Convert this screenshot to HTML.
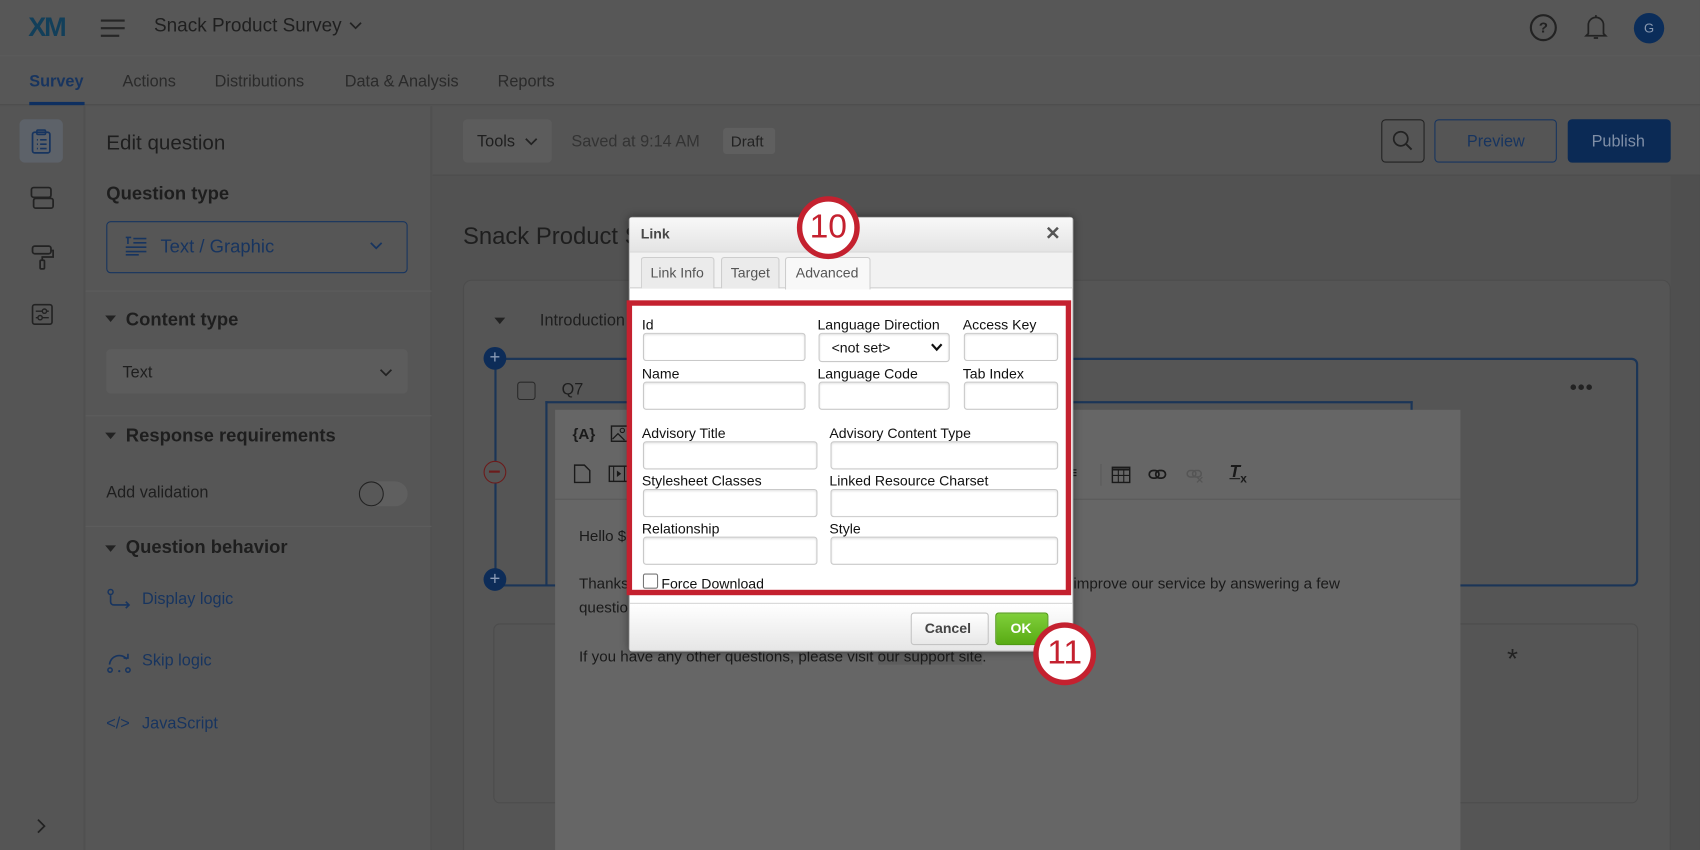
<!DOCTYPE html>
<html><head><meta charset="utf-8">
<style>
*{box-sizing:border-box;margin:0;padding:0}
html,body{width:1700px;height:850px;overflow:hidden;background:#525252}
#w{position:absolute;left:0;top:0;width:1568px;height:784px;transform:scale(1.08418);transform-origin:0 0;font-family:"Liberation Sans",Arial,sans-serif;color:#1e1e1e;background:#525252;overflow:hidden}
.a{position:absolute}
.t{position:absolute;white-space:nowrap;line-height:1}
.lbl{position:absolute;font-size:13px;color:#111;white-space:nowrap;line-height:1}
.in{position:absolute;background:#fff;border:1px solid #c9c9c9;border-radius:3px;box-shadow:inset 0 1px 2px rgba(0,0,0,.12);height:26px}
</style></head><body><div id="w">
<div class="a" style="left:0;top:0;width:1568px;height:52px;background:#575757;border-bottom:1px solid #5d5d5d"></div>
<div class="t" style="left:26px;top:13px;font-size:25px;font-weight:bold;letter-spacing:-2px;color:#123f5a">XM</div>
<div class="a" style="left:93px;top:18px;width:22px;height:2px;background:#262626"></div>
<div class="a" style="left:93px;top:25px;width:22px;height:2px;background:#262626"></div>
<div class="a" style="left:93px;top:32px;width:17px;height:2px;background:#262626"></div>
<div class="t" style="left:142px;top:15px;font-size:17.5px;color:#1f1f1f">Snack Product Survey</div>
<svg class="a" style="left:321px;top:19px" width="14" height="10"><path d="M2 2l5 5 5-5" fill="none" stroke="#222" stroke-width="1.6"/></svg>
<div class="a" style="left:1411px;top:13px;width:25px;height:25px;border:2px solid #222;border-radius:50%;font-size:14px;text-align:center;line-height:21px;font-weight:bold;color:#222">?</div>
<svg class="a" style="left:1461px;top:12px" width="22" height="26"><path d="M4 19V11a7 7 0 0 1 14 0v8l2 2H2zM9 23h4M11 2v2" fill="none" stroke="#222" stroke-width="1.6"/></svg>
<div class="a" style="left:1507px;top:12px;width:28px;height:28px;border-radius:50%;background:#0b2d5a;color:#8a99b0;font-size:12px;text-align:center;line-height:28px">G</div>
<div class="a" style="left:0;top:52px;width:1568px;height:45px;background:#575757;border-bottom:1px solid #4e4e4e"></div>
<div class="t" style="left:27px;top:68px;font-size:15px;font-weight:bold;color:#17345f">Survey</div>
<div class="a" style="left:27px;top:94px;width:51px;height:3px;background:#0e2f60"></div>
<div class="t" style="left:113px;top:68px;font-size:15px;color:#2a2a2a">Actions</div>
<div class="t" style="left:198px;top:68px;font-size:15px;color:#2a2a2a">Distributions</div>
<div class="t" style="left:318px;top:68px;font-size:15px;color:#2a2a2a">Data &amp; Analysis</div>
<div class="t" style="left:459px;top:68px;font-size:15px;color:#2a2a2a">Reports</div>
<div class="a" style="left:0;top:98px;width:78px;height:686px;background:#555;border-right:1px solid #4f4f4f"></div>
<div class="a" style="left:18px;top:110px;width:40px;height:40px;background:#5d6269;border-radius:5px"></div>
<svg class="a" style="left:27px;top:118px" width="22" height="26"><rect x="3" y="4" width="16" height="19" rx="2" fill="none" stroke="#17345f" stroke-width="1.6"/><rect x="7" y="2" width="8" height="4" rx="1" fill="none" stroke="#17345f" stroke-width="1.5"/><path d="M7 11h1M10 11h6M7 15h1M10 15h6M7 19h1M10 19h6" stroke="#17345f" stroke-width="1.5"/></svg>
<svg class="a" style="left:27px;top:170px" width="24" height="26"><rect x="2" y="3" width="18" height="9" rx="2" fill="none" stroke="#222" stroke-width="1.6"/><rect x="4" y="13" width="18" height="9" rx="2" fill="none" stroke="#222" stroke-width="1.6"/></svg>
<svg class="a" style="left:28px;top:224px" width="22" height="26"><rect x="2" y="3" width="17" height="7" rx="2" fill="none" stroke="#222" stroke-width="1.6"/><path d="M19 7h2v6h-10v3" fill="none" stroke="#222" stroke-width="1.6"/><rect x="9" y="16" width="4" height="8" rx="1" fill="none" stroke="#222" stroke-width="1.6"/></svg>
<svg class="a" style="left:28px;top:279px" width="22" height="22"><rect x="2" y="2" width="18" height="18" rx="2" fill="none" stroke="#222" stroke-width="1.5"/><path d="M5 8h12M5 14h12" stroke="#222" stroke-width="1.3"/><circle cx="13" cy="8" r="2" fill="#555" stroke="#222" stroke-width="1.3"/><circle cx="9" cy="14" r="2" fill="#555" stroke="#222" stroke-width="1.3"/></svg>
<svg class="a" style="left:33px;top:754px" width="10" height="16"><path d="M2 2l6 6-6 6" fill="none" stroke="#222" stroke-width="1.6"/></svg>
<div class="a" style="left:79px;top:98px;width:319px;height:686px;background:#565656;border-right:1px solid #4e4e4e"></div>
<div class="t" style="left:98px;top:123px;font-size:19px;color:#1e1e1e">Edit question</div>
<div class="t" style="left:98px;top:170px;font-size:17px;font-weight:bold;color:#1e1e1e">Question type</div>
<div class="a" style="left:98px;top:204px;width:278px;height:48px;border:1.5px solid #17345f;border-radius:4px"></div>
<svg class="a" style="left:114px;top:217px" width="24" height="20"><path d="M2 2h5M4 2v6M9 3h12M9 7h12M2 11h19M2 15h19M2 18h12" stroke="#17345f" stroke-width="1.5"/></svg>
<div class="t" style="left:148px;top:219px;font-size:17px;color:#17345f">Text / Graphic</div>
<svg class="a" style="left:340px;top:222px" width="14" height="10"><path d="M2 2l5 5 5-5" fill="none" stroke="#17345f" stroke-width="1.6"/></svg>
<div class="a" style="left:79px;top:268px;width:319px;height:1px;background:#5d5d5d"></div>
<svg class="a" style="left:96px;top:290px" width="12" height="8"><path d="M1 1h10L6 7z" fill="#222"/></svg>
<div class="t" style="left:116px;top:286px;font-size:17px;font-weight:bold;color:#1e1e1e">Content type</div>
<div class="a" style="left:98px;top:322px;width:278px;height:41px;background:#5c5c5c;border-radius:4px"></div>
<div class="t" style="left:113px;top:336px;font-size:15px;color:#1e1e1e">Text</div>
<svg class="a" style="left:349px;top:339px" width="14" height="10"><path d="M2 2l5 5 5-5" fill="none" stroke="#222" stroke-width="1.6"/></svg>
<div class="a" style="left:79px;top:383px;width:319px;height:1px;background:#5d5d5d"></div>
<svg class="a" style="left:96px;top:398px" width="12" height="8"><path d="M1 1h10L6 7z" fill="#222"/></svg>
<div class="t" style="left:116px;top:393px;font-size:17px;font-weight:bold;color:#1e1e1e">Response requirements</div>
<div class="t" style="left:98px;top:447px;font-size:15px;color:#1e1e1e">Add validation</div>
<div class="a" style="left:331px;top:444px;width:45px;height:23px;border-radius:12px;background:#5f5f5f"></div>
<div class="a" style="left:331px;top:444px;width:23px;height:23px;border-radius:50%;background:#585858;border:1px solid #222"></div>
<div class="a" style="left:79px;top:485px;width:319px;height:1px;background:#5d5d5d"></div>
<svg class="a" style="left:96px;top:502px" width="12" height="8"><path d="M1 1h10L6 7z" fill="#222"/></svg>
<div class="t" style="left:116px;top:496px;font-size:17px;font-weight:bold;color:#1e1e1e">Question behavior</div>
<svg class="a" style="left:98px;top:542px" width="26" height="24"><circle cx="4" cy="4" r="2.3" fill="none" stroke="#17345f" stroke-width="1.4"/><path d="M4 7v6a3 3 0 0 0 3 3h14M18 13l3 3-3 3" fill="none" stroke="#17345f" stroke-width="1.5"/></svg>
<div class="t" style="left:131px;top:545px;font-size:15px;color:#17345f">Display logic</div>
<svg class="a" style="left:98px;top:599px" width="26" height="24"><circle cx="3.5" cy="19" r="2" fill="none" stroke="#17345f" stroke-width="1.4"/><circle cx="20" cy="19" r="2" fill="none" stroke="#17345f" stroke-width="1.4"/><circle cx="12" cy="20" r="1" fill="#17345f"/><path d="M3 14a9 9 0 0 1 16-5M16 8h4V4" fill="none" stroke="#17345f" stroke-width="1.5"/></svg>
<div class="t" style="left:131px;top:602px;font-size:15px;color:#17345f">Skip logic</div>
<div class="t" style="left:98px;top:660px;font-size:15px;color:#17345f">&lt;/&gt;</div>
<div class="t" style="left:131px;top:660px;font-size:15px;color:#17345f">JavaScript</div>
<div class="a" style="left:399px;top:98px;width:1169px;height:64px;background:#555;border-bottom:1px solid #4d4d4d"></div>
<div class="a" style="left:427px;top:110px;width:82px;height:40px;background:#5c5c5c;border-radius:4px"></div>
<div class="t" style="left:440px;top:123px;font-size:15px;color:#1e1e1e">Tools</div>
<svg class="a" style="left:483px;top:126px" width="14" height="10"><path d="M2 2l5 5 5-5" fill="none" stroke="#222" stroke-width="1.6"/></svg>
<div class="t" style="left:527px;top:123px;font-size:15px;color:#333">Saved at 9:14 AM</div>
<div class="a" style="left:667px;top:118px;width:48px;height:24px;background:#5f5f5f;border-radius:3px"></div>
<div class="t" style="left:674px;top:123px;font-size:14px;color:#222">Draft</div>
<div class="a" style="left:1274px;top:110px;width:40px;height:40px;border:1px solid #222;border-radius:4px"></div>
<svg class="a" style="left:1282px;top:118px" width="24" height="24"><circle cx="10" cy="10" r="6.5" fill="none" stroke="#222" stroke-width="1.6"/><path d="M15 15l5 5" stroke="#222" stroke-width="1.8"/></svg>
<div class="a" style="left:1323px;top:110px;width:113px;height:40px;border:1.5px solid #17345f;border-radius:4px"></div>
<div class="t" style="left:1353px;top:123px;font-size:15px;color:#17345f">Preview</div>
<div class="a" style="left:1446px;top:110px;width:95px;height:40px;background:#0b2a55;border-radius:4px"></div>
<div class="t" style="left:1468px;top:123px;font-size:15px;color:#7f8ea6">Publish</div>
<div class="a" style="left:1541px;top:162px;width:27px;height:622px;background:#4f4f4f"></div>
<div class="t" style="left:427px;top:207px;font-size:22px;color:#1e1e1e">Snack Product Survey</div>
<div class="a" style="left:427px;top:258px;width:1114px;height:540px;background:#555;border:1px solid #4c4c4c;border-radius:8px"></div>
<svg class="a" style="left:455px;top:292px" width="12" height="8"><path d="M1 1h10L6 7z" fill="#222"/></svg>
<div class="t" style="left:498px;top:288px;font-size:15px;color:#1e1e1e">Introduction</div>
<div class="a" style="left:456px;top:330px;width:1055px;height:211px;border:2px solid #1b3557;border-radius:6px;background:#555"></div>
<div class="a" style="left:446px;top:320px;width:21px;height:21px;border-radius:50%;background:#0d2c58;color:#8a9ab5;font-size:17px;line-height:20px;text-align:center">+</div>
<div class="a" style="left:446px;top:425px;width:21px;height:21px;border-radius:50%;border:1.5px solid #6c1b1b;background:#555"></div>
<div class="a" style="left:451px;top:434px;width:10px;height:1.5px;background:#6c1b1b"></div>
<div class="a" style="left:446px;top:524px;width:21px;height:21px;border-radius:50%;background:#0d2c58;color:#8a9ab5;font-size:17px;line-height:20px;text-align:center">+</div>
<div class="a" style="left:477px;top:352px;width:17px;height:17px;border:1.3px solid #2a2a2a;border-radius:3px"></div>
<div class="t" style="left:518px;top:352px;font-size:15px;color:#1e1e1e">Q7</div>
<div class="t" style="left:1448px;top:348px;font-size:18px;font-weight:bold;color:#222;letter-spacing:1px">•••</div>
<div class="a" style="left:503px;top:370px;width:800px;height:170px;border:2px solid #1b3557;border-bottom:none"></div>
<div class="a" style="left:455px;top:575px;width:1056px;height:166px;border:1px solid #4c4c4c;border-radius:6px;background:#555"></div>
<div class="t" style="left:1390px;top:594px;font-size:26px;color:#222">*</div>
<div class="a" style="left:512px;top:378px;width:835px;height:406px;background:#666"></div>
<div class="a" style="left:512px;top:460px;width:835px;height:1px;background:#5a5a5a"></div>
<div class="t" style="left:528px;top:393px;font-size:14px;font-weight:bold;color:#1a1a1a">{A}</div>
<svg class="a" style="left:563px;top:392px" width="18" height="16"><rect x="1" y="1" width="16" height="14" fill="none" stroke="#1a1a1a" stroke-width="1.3"/><circle cx="11" cy="5" r="2" fill="none" stroke="#1a1a1a"/><path d="M2 13l5-5 6 6" fill="none" stroke="#1a1a1a" stroke-width="1.2"/></svg>
<svg class="a" style="left:529px;top:428px" width="16" height="18"><path d="M1 1h9l5 5v11H1z" fill="none" stroke="#1a1a1a" stroke-width="1.3"/></svg>
<svg class="a" style="left:561px;top:429px" width="20" height="16"><rect x="1" y="1" width="18" height="14" fill="none" stroke="#1a1a1a" stroke-width="1.3"/><path d="M5 1v14M15 1v14" stroke="#1a1a1a"/><path d="M8 5l4 3-4 3z" fill="#1a1a1a"/></svg>
<div class="t" style="left:985px;top:429px;font-size:15px;font-weight:bold;color:#1a1a1a">≡</div>
<div class="a" style="left:1015px;top:428px;width:1px;height:20px;background:#5a5a5a"></div>
<svg class="a" style="left:1025px;top:430px" width="18" height="16"><rect x="1" y="1" width="16" height="14" fill="none" stroke="#1a1a1a" stroke-width="1.3"/><path d="M1 3h16" stroke="#1a1a1a" stroke-width="2"/><path d="M1 8.5h16M6.5 3v12M11.5 3v12" stroke="#1a1a1a"/></svg>
<svg class="a" style="left:1059px;top:432px" width="18" height="12"><rect x="1" y="2" width="9" height="7" rx="3.5" fill="none" stroke="#1a1a1a" stroke-width="1.6"/><rect x="7" y="2" width="9" height="7" rx="3.5" fill="none" stroke="#1a1a1a" stroke-width="1.6"/></svg>
<svg class="a" style="left:1094px;top:432px" width="18" height="14"><rect x="1" y="2" width="8" height="6" rx="3" fill="none" stroke="#555" stroke-width="1.4"/><rect x="6" y="2" width="8" height="6" rx="3" fill="none" stroke="#555" stroke-width="1.4"/><path d="M10 8l5 5M15 8l-5 5" stroke="#555" stroke-width="1.2"/></svg>
<div class="t" style="left:1134px;top:428px;font-size:16px;font-weight:bold;font-style:italic;color:#1a1a1a;text-decoration:underline">T</div>
<div class="t" style="left:1144px;top:437px;font-size:11px;font-weight:bold;color:#1a1a1a">x</div>
<div class="t" style="left:534px;top:487px;font-size:14px;color:#1a1a1a">Hello $</div>
<div class="t" style="left:534px;top:531px;font-size:14px;color:#1a1a1a">Thanks</div>
<div class="t" style="left:990px;top:531px;font-size:14px;color:#1a1a1a">improve our service by answering a few</div>
<div class="t" style="left:534px;top:553px;font-size:14px;color:#1a1a1a">questio</div>
<div class="t" style="left:534px;top:598px;font-size:14px;color:#1a1a1a">If you have any other questions, please visit <span style="background:#5d5d5d">our support site</span>.</div>
<div class="a" style="left:580px;top:200px;width:410px;height:401px;background:#fff;border:1px solid #bbb;border-radius:3px;box-shadow:0 0 8px rgba(0,0,0,.4)"></div>
<div class="a" style="left:581px;top:201px;width:408px;height:32px;background:linear-gradient(#f8f8f8,#e4e4e4);border-bottom:1px solid #d6d6d6"></div>
<div class="t" style="left:591px;top:209px;font-size:13px;font-weight:bold;color:#474747">Link</div>
<div class="t" style="left:964px;top:207px;font-size:17px;font-weight:bold;color:#555">✕</div>
<div class="a" style="left:581px;top:233px;width:408px;height:33px;background:#f2f2f2;border-bottom:1px solid #d0d0d0"></div>
<div class="a" style="left:591px;top:237px;width:68px;height:29px;background:#ebebeb;border:1px solid #cdcdcd;border-bottom:none;border-radius:3px 3px 0 0"></div>
<div class="t" style="left:600px;top:245px;font-size:13px;color:#555">Link Info</div>
<div class="a" style="left:665px;top:237px;width:54px;height:29px;background:#ebebeb;border:1px solid #cdcdcd;border-bottom:none;border-radius:3px 3px 0 0"></div>
<div class="t" style="left:674px;top:245px;font-size:13px;color:#555">Target</div>
<div class="a" style="left:724px;top:237px;width:79px;height:30px;background:#f8f8f8;border:1px solid #cdcdcd;border-bottom:none;border-radius:3px 3px 0 0"></div>
<div class="t" style="left:734px;top:245px;font-size:13px;color:#555">Advanced</div>
<div class="a" style="left:578px;top:277px;width:410px;height:272px;border:5px solid #c4212f"></div>
<div class="lbl" style="left:592px;top:293px">Id</div>
<div class="lbl" style="left:754px;top:293px">Language Direction</div>
<div class="lbl" style="left:888px;top:293px">Access Key</div>
<div class="in" style="left:593px;top:307px;width:150px"></div>
<div class="in" style="left:755px;top:307px;width:121px;height:27px"></div>
<div class="t" style="left:767px;top:314px;font-size:13px;color:#111">&lt;not set&gt;</div>
<svg class="a" style="left:858px;top:316px" width="12" height="9"><path d="M1.5 1.5l4.5 5 4.5-5" fill="none" stroke="#111" stroke-width="2"/></svg>
<div class="in" style="left:889px;top:307px;width:87px"></div>
<div class="lbl" style="left:592px;top:338px">Name</div>
<div class="lbl" style="left:754px;top:338px">Language Code</div>
<div class="lbl" style="left:888px;top:338px">Tab Index</div>
<div class="in" style="left:593px;top:352px;width:150px"></div>
<div class="in" style="left:755px;top:352px;width:121px"></div>
<div class="in" style="left:889px;top:352px;width:87px"></div>
<div class="lbl" style="left:592px;top:393px">Advisory Title</div>
<div class="lbl" style="left:765px;top:393px">Advisory Content Type</div>
<div class="in" style="left:593px;top:407px;width:161px"></div>
<div class="in" style="left:766px;top:407px;width:210px"></div>
<div class="lbl" style="left:592px;top:437px">Stylesheet Classes</div>
<div class="lbl" style="left:765px;top:437px">Linked Resource Charset</div>
<div class="in" style="left:593px;top:451px;width:161px"></div>
<div class="in" style="left:766px;top:451px;width:210px"></div>
<div class="lbl" style="left:592px;top:481px">Relationship</div>
<div class="lbl" style="left:765px;top:481px">Style</div>
<div class="in" style="left:593px;top:495px;width:161px"></div>
<div class="in" style="left:766px;top:495px;width:210px"></div>
<div class="a" style="left:593px;top:529px;width:14px;height:14px;border:1px solid #777;border-radius:2px;background:#fff"></div>
<div class="lbl" style="left:610px;top:532px">Force Download</div>
<div class="a" style="left:581px;top:556px;width:408px;height:44px;background:linear-gradient(#fff,#e6e6e6);border-top:1px solid #d6d6d6"></div>
<div class="a" style="left:840px;top:565px;width:72px;height:30px;background:linear-gradient(#fff,#e8e8e8);border:1px solid #c4c4c4;border-radius:3px"></div>
<div class="t" style="left:853px;top:573px;font-size:13px;font-weight:bold;color:#444">Cancel</div>
<div class="a" style="left:918px;top:565px;width:49px;height:30px;background:linear-gradient(#7fcf3a,#59ab14);border:1px solid #4f9a13;border-radius:3px"></div>
<div class="t" style="left:932px;top:573px;font-size:13px;font-weight:bold;color:#fff">OK</div>
<div class="a" style="left:735px;top:181px;width:58px;height:58px;border-radius:50%;background:#fff;border:5px solid #c4212f"></div>
<div class="t" style="left:736px;top:193px;width:56px;text-align:center;font-size:31px;color:#c4212f">10</div>
<div class="a" style="left:953px;top:574px;width:58px;height:58px;border-radius:50%;background:#fff;border:5px solid #c4212f"></div>
<div class="t" style="left:954px;top:586px;width:56px;text-align:center;font-size:31px;color:#c4212f">11</div>
</div></body></html>
